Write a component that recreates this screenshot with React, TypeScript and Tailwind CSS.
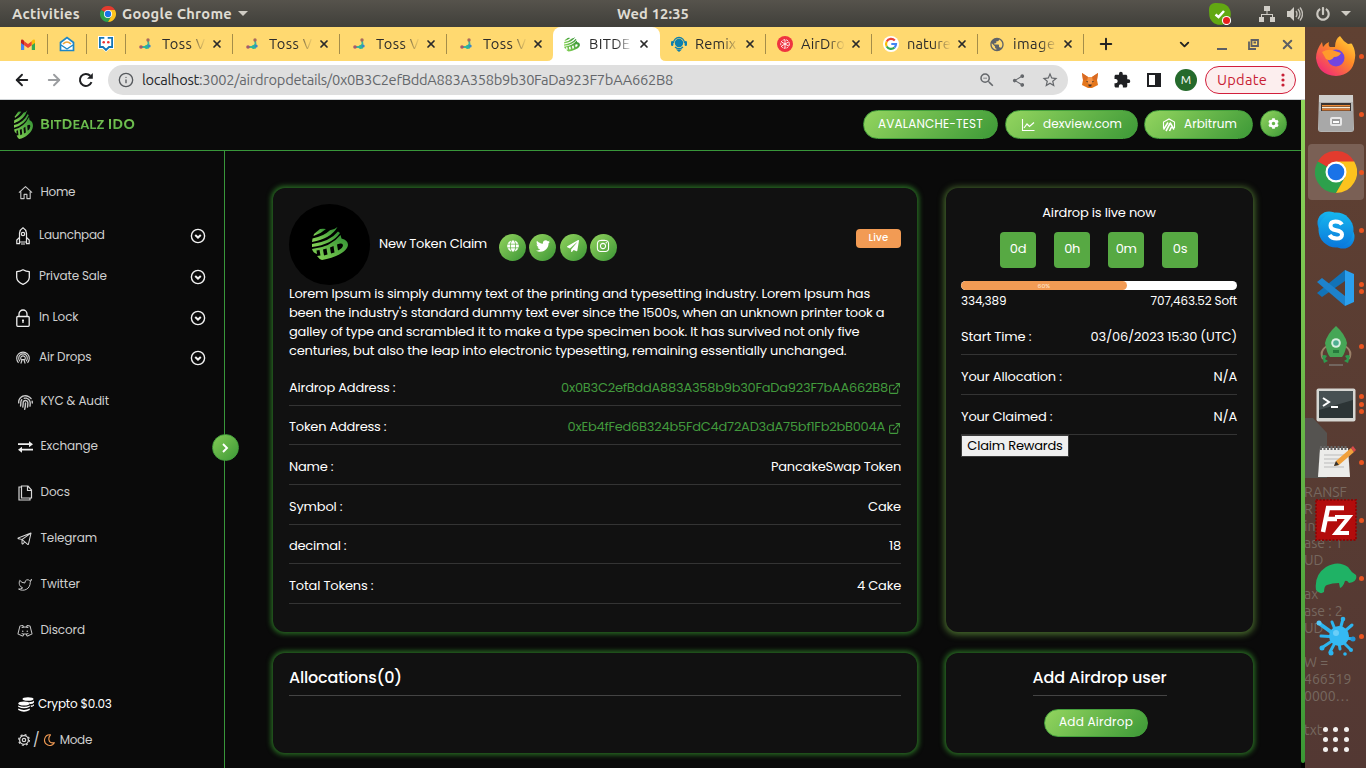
import { useLayoutEffect, useRef, useState } from 'react';
import type { ReactNode } from 'react';
import { FaGlobe, FaTwitter, FaPaperPlane, FaInstagram, FaCog, FaPowerOff, FaFingerprint } from 'react-icons/fa';
import { FiExternalLink, FiTwitter } from 'react-icons/fi';
import { PiTelegramLogo, PiDiscordLogo } from 'react-icons/pi';
import { MdOutlineStarBorder, MdShare, MdOutlineZoomOut, MdPublic, MdExtension } from 'react-icons/md';
import { Info, X, Plus, ChevronDown, ArrowLeft, ArrowRight } from 'lucide-react';

/** Single line of text whose tracking is adjusted so that it spans about `w` pixels. */
function T({ w, className = '', children }: { w: number; className?: string; children: ReactNode }) {
  const ref = useRef<HTMLSpanElement>(null);
  const [ls, setLs] = useState(0);
  useLayoutEffect(() => {
    const el = ref.current;
    if (!el) return;
    const n = (el.textContent || '').length || 1;
    setLs((w - 0.6 - el.getBoundingClientRect().width) / n);
  }, [w]);
  return (
    <span ref={ref} className={`inline-block whitespace-nowrap shrink-0 ${className}`} style={{ letterSpacing: ls }}>
      {children}
    </span>
  );
}

function LogoMark({ className = '', id }: { className?: string; id: string }) {
  return (
    <svg viewBox="0 0 36 34" preserveAspectRatio="none" className={className}>
      <defs>
        <linearGradient id={id} x1="0" y1="1" x2="1" y2="0">
          <stop offset="0" stopColor="#8ad657" />
          <stop offset="1" stopColor="#2f8f33" />
        </linearGradient>
      </defs>
      <g fill={`url(#${id})`} fillRule="evenodd">
        <path d="M2 7 L8 2 Q11 1.500 14 2 Q9 6.500 1.500 9Z" />
        <path d="M.5 11.500 Q12 9 18 3.200 Q22 3 25.500 0 Q19 11.500 0 15Z" />
        <path d="M0 17 Q18 14.500 26 4.500 L28 6 Q20 17.500 0 20Z" />
        <path d="M0 22 Q19 20 28.500 8 L29.500 11.500 Q36 13 36 18 C35 26 21 31 10 33 Q7 32 5 29 L8.500 28.500 L7.500 23 L4.500 23.500 L5 27 Q1 26 0 22ZM11 22.500 L12 28.500 L15.500 27.500 L14.500 21.500ZM18 20.500 L19 26.500 L22.500 25.500 L21.500 19ZM25 17.500 L26 23.500 Q31 21 31 18 Q30 15.500 25 17.500Z" />
      </g>
    </svg>
  );
}

function ChromeLogo({ className = '' }: { className?: string }) {
  return (
    <svg viewBox="0 0 48 48" className={className}>
      <path d="M24 24 L3.200 12 A24 24 0 0 1 44.800 12 Z" fill="#e33b2e" />
      <path d="M24 24 L34.400 30 L24 48 A24 24 0 0 1 3.200 12 Z" fill="#2da04c" />
      <path d="M24 12 H44.800 A24 24 0 0 1 24 48 L34.400 30Z" fill="#fcc31e" />
      <circle cx="24" cy="24" r="12" fill="#fff" />
      <circle cx="24" cy="24" r="9.500" fill="#1a73e8" />
    </svg>
  );
}

function TopBar() {
  return (
    <header className="flex h-[27px] items-center bg-linear-to-b from-[#56534c] to-[#403f3a] font-['Ubuntu','Noto_Sans',sans-serif] text-[14.67px] font-semibold text-[#dfdbd2]">
      <div className="flex w-[617px] items-center pl-3">
        <T w={68.6}>Activities</T>
        <ChromeLogo className="ml-5 size-4" />
        <T w={110.6} className="ml-[6px]">Google Chrome</T>
        <svg viewBox="0 0 10 5" className="ml-[6px] h-[5px] w-[10px]"><path d="M0 0H10L5 5Z" fill="#cfccc4" /></svg>
      </div>
      <T w={72.6}>Wed 12:35</T>
      <div className="ml-auto flex items-center pr-[15px]">
        <svg viewBox="0 0 22 22" className="mr-[28px] size-[22px]">
          <rect x="0" y="0" width="14" height="14" rx="6" fill="#62a812" />
          <circle cx="11" cy="11" r="10.800" fill="#62a812" />
          <path d="M6.500 11.500 L9.500 14 L15 8" stroke="#fff" strokeWidth="2.500" fill="none" />
          <circle cx="17.500" cy="17.500" r="4.600" fill="#fff" />
          <circle cx="17.500" cy="17.500" r="3.500" fill="#e8211d" />
        </svg>
        <svg viewBox="0 0 16 16" className="mr-3 size-4" fill="#d0cdc6">
          <path d="M5 0h6v5H8.500v3H14v3h2v5h-5v-5h2V9H3v2h2v5H0v-5h2V8h5.500V5H5z" />
        </svg>
        <svg viewBox="0 0 16 16" className="mr-[13px] size-4">
          <path d="M0 5h3l4-4v14l-4-4H0z" fill="#d0cdc6" />
          <path d="M9 5q2 3 0 6M11 3q4 5 0 10M13 1.500q5 6.500 0 13" stroke="#c0bdb6" strokeWidth="1.400" fill="none" />
        </svg>
        <FaPowerOff className="mr-[11px] size-[14px] text-[#cbc8c1]" />
        <svg viewBox="0 0 10 5" className="h-[5px] w-[10px]"><path d="M0 0H10L5 5Z" fill="#cfccc4" /></svg>
      </div>
    </header>
  );
}

function TossIcon() {
  return (
    <svg viewBox="0 0 12 12" className="size-[12px]">
      <path d="M2 9 L7 9 L9.500 6 L9 2 M7 9 L10 10" stroke="#3bb79a" strokeWidth="1.800" fill="none" />
      <circle cx="2" cy="9" r="1.800" fill="#a65a6c" /><circle cx="9" cy="2" r="1.700" fill="#a86a5c" />
      <circle cx="7.500" cy="9" r="2" fill="#2cb59b" /><circle cx="10.200" cy="8" r="1.500" fill="#3a86c8" />
    </svg>
  );
}

function Tab({ icon, label, w, width = 'w-[107px]', gap = 'ml-[9px]', active = false, sep = true }: { icon: ReactNode; label: string; w: number; width?: string; gap?: string; active?: boolean; sep?: boolean }) {
  return (
    <div className={`${width} relative flex h-[34px] shrink-0 items-center pl-[11px] ${active ? 'rounded-t-lg bg-white' : ''}`}>
      {active && <svg viewBox="0 0 6 6" className="absolute bottom-0 -left-[6px] size-[6px]"><path d="M6 0Q6 6 0 6H6z" fill="#fff" /></svg>}
      {active && <svg viewBox="0 0 6 6" className="absolute -right-[6px] bottom-0 size-[6px]"><path d="M0 0Q0 6 6 6H0z" fill="#fff" /></svg>}
      <span className="flex w-4 justify-center">{icon}</span>
      <span className={`${gap} w-[44px] overflow-hidden [mask-image:linear-gradient(to_right,#000_60%,transparent_100%)]`}>
        <T w={w}>{label}</T>
      </span>
      <X className="ml-[5px] size-[12px] text-[#2b2b2b]" strokeWidth={3.4} />
      {sep && <span className="ml-auto h-5 w-px bg-[#a58d49]" />}
    </div>
  );
}

function TabBar() {
  return (
    <div className="flex h-[34px] items-center bg-[#ffd970] font-['Ubuntu','Noto_Sans',sans-serif] text-[14.67px] text-[#2b2b2b]">
      <div className="flex w-12 items-center pl-[21px]">
        <svg viewBox="0 0 14 11" className="h-[11px] w-[14px]">
          <path d="M0 1.500V11H3.200V5z" fill="#4285f4" /><path d="M10.800 5V11H14V1.500z" fill="#34a853" />
          <path d="M3.200 2.200 7 5 10.800 2.200V6.200L7 9 3.200 6.200z" fill="#ea4335" />
          <path d="M0 2Q0 0 2 .8L3.200 2V6.200L0 4z" fill="#c5221f" /><path d="M14 2Q14 0 12 .8L10.800 2V6.200L14 4z" fill="#fbbc04" />
        </svg>
        <span className="ml-auto h-5 w-px bg-[#a58d49]" />
      </div>
      <div className="flex w-[39px] items-center pl-[11px]">
        <svg viewBox="0 0 16 16" className="size-4"><path d="M1.500 6.500 8 1.500l6.500 5V14.500h-13z" fill="#fff" stroke="#1c86c7" strokeWidth="1.700" /><path d="M4 8q4-4 8 0" stroke="#f0a63a" strokeWidth="1.600" fill="none" /><path d="M2 9l6 4 6-4" stroke="#1c86c7" strokeWidth="1.400" fill="none" /></svg>
        <span className="ml-auto h-5 w-px bg-[#a58d49]" />
      </div>
      <div className="flex w-[39px] items-center pl-[11px]">
        <svg viewBox="0 0 16 16" className="size-4">
          <path d="M0 0h16v13h-4.500L8 16l-3.500-3H0z" fill="#fff" />
          <path d="M6.300 1.800H1.900V11H5l3 3 3-3h3.100V1.800H9.700" fill="none" stroke="#1476b8" strokeWidth="1.800" />
          <circle cx="5.700" cy="6.300" r="1.300" fill="#e33" /><circle cx="10.300" cy="6.300" r="1.300" fill="#e33" />
        </svg>
        <span className="ml-auto h-5 w-px bg-[#a58d49]" />
      </div>
      <Tab icon={<TossIcon />} label="Toss V" w={44} />
      <Tab icon={<TossIcon />} label="Toss V" w={44} />
      <Tab icon={<TossIcon />} label="Toss V" w={44} />
      <Tab icon={<TossIcon />} label="Toss V" w={44} width="w-[106px]" sep={false} />
      <Tab icon={<LogoMark id="fav" className="h-[15px] w-4" />} label="BITDE" w={42} active sep={false} />
      <Tab
        icon={<svg viewBox="0 0 16 16" className="size-4"><path d="M8 13.500l-3 0 3 2.500 3-2.500z" fill="#0c7fae" /><circle cx="8" cy="7" r="4.200" fill="#0c7fae" /><path d="M2.500 7a5.500 5.500 0 0 1 11 0M4 11q4 3.500 8 0" stroke="#0c7fae" strokeWidth="1.300" fill="none" /><rect x="0" y="5" width="2.400" height="5" rx="1.200" fill="#0c7fae" /><rect x="13.600" y="5" width="2.400" height="5" rx="1.200" fill="#0c7fae" /></svg>}
        label="Remix" w={42} width="w-[106px]" gap="ml-[8px]" />
      <Tab
        icon={<svg viewBox="0 0 16 16" className="size-4"><circle cx="8" cy="8" r="8" fill="#ef3340" /><circle cx="8" cy="8" r="4.300" stroke="#fff" strokeWidth="1" strokeDasharray="2 1" fill="none" /><path d="M8 4v8M4.500 6l7 4M4.500 10l7-4" stroke="#fff" strokeWidth=".9" /></svg>}
        label="AirDro" w={44.500} width="w-[106px]" gap="ml-[8px]" />
      <Tab
        icon={<svg viewBox="0 0 16 16" className="size-4"><circle cx="8" cy="8" r="8" fill="#fff" /><g fill="none" strokeWidth="2.200"><path d="M11.800 4.600A5 5 0 0 0 3.700 5.500" stroke="#ea4335" /><path d="M3.700 5.500a5 5 0 0 0 0 5" stroke="#fbbc05" /><path d="M3.700 10.500a5 5 0 0 0 7.800 1" stroke="#34a853" /><path d="M11.500 11.500A5 5 0 0 0 13 8H8.300" stroke="#4285f4" /></g></svg>}
        label="nature" w={44.500} width="w-[106px]" gap="ml-[8px]" />
      <Tab icon={<MdPublic className="size-[17px] text-[#5f6368]" />} label="image" w={43} width="w-[106px]" gap="ml-[8px]" />
      <Plus className="ml-[13px] size-[18px] text-[#222]" strokeWidth={2.6} />
      <div className="ml-auto flex items-center pr-[10px] text-[#5d5f5c]">
        <ChevronDown className="size-[15px] text-[#222]" strokeWidth={3} />
        <span className="mt-[9px] ml-[25px] h-[2px] w-[10px] bg-[#5d5f64]" />
        <svg viewBox="0 0 11 11" className="ml-[21px] size-[11px]"><path d="M3.500 1h6.500v6H3.500zM5.500 3.500h2.500M1 2.500v7.500h7" fill="none" stroke="#5d5f64" strokeWidth="1.800" /></svg>
        <X className="ml-[21px] size-[15px] text-[#5d5f64]" strokeWidth={3.2} />
      </div>
    </div>
  );
}

function Fox() {
  return (
    <svg viewBox="0 0 16 15" className="h-[15px] w-4">
      <path d="M0 0l6 4h4l6-4-1 7 1 5-4 2-2 1H6l-2-1-4-2 1-5z" fill="#e4761b" />
      <path d="M0 0l6 4-2 3H1zM16 0l-6 4 2 3h3z" fill="#d96a24" /><path d="M6 4h4l1 5-3 3-3-3z" fill="#f5964a" /><path d="M4 8l2 .5-.5 1zM12 8l-2 .5.500 1z" fill="#222" /><path d="M6.300 11.500h3.400l-.5 2H6.800z" fill="#40302a" />
    </svg>
  );
}

function Toolbar() {
  return (
    <div className="flex h-[39px] items-center border-b border-[#cfd3d6] bg-white font-['Ubuntu','Noto_Sans',sans-serif]">
      <ArrowLeft className="ml-[13px] size-[18px] text-[#1f2023]" strokeWidth={2.5} />
      <ArrowRight className="ml-[14px] size-[18px] text-[#9b9da0]" strokeWidth={2.5} />
      <svg viewBox="0 0 16 16" className="ml-[15px] size-4"><path d="M13.500 10.200A6 6 0 1 1 12.300 3.800" fill="none" stroke="#1f2023" strokeWidth="2" /><path d="M14.800 1v5.800H9z" fill="#1f2023" /></svg>
      <div className="ml-[14px] flex h-[30px] w-[960px] items-center rounded-full bg-[#dfdfdf] pr-[9px] pl-[10px] text-[14.67px] text-[#64676b]">
        <Info className="size-4 text-[#56595d]" strokeWidth={2} />
        <T w={531.6} className="ml-2"><span className="text-[#26282b]">localhost</span>:3002/airdropdetails/0x0B3C2efBddA883A358b9b30FaDa923F7bAA662B8</T>
        <MdOutlineZoomOut className="ml-auto size-[18px]" />
        <MdShare className="ml-[15px] size-[15px]" />
        <MdOutlineStarBorder className="ml-[15px] size-[18px]" />
      </div>
      <div className="ml-[14px]"><Fox /></div>
      <MdExtension className="ml-[15px] size-[18px] text-[#1f2023]" />
      <span className="ml-[16px] h-[14px] w-[14px] border-2 border-r-[6px] border-[#1f2023]" />
      <span className="ml-[14px] flex size-[22px] items-center justify-center rounded-full bg-[#256a2c] text-[12px] text-white">M</span>
      <div className="ml-2 flex h-7 w-[91px] items-center rounded-full border border-[#d21f3c] bg-[#fceeee] pl-[11px] text-[14.67px] text-[#c81e35]">
        <T w={50.6}>Update</T>
        <svg viewBox="0 0 4 14" className="ml-[14px] h-[14px] w-1" fill="#c81e35"><circle cx="2" cy="2" r="1.600" /><circle cx="2" cy="7" r="1.600" /><circle cx="2" cy="12" r="1.600" /></svg>
      </div>
    </div>
  );
}

const pill = 'flex items-center rounded-full border border-[#45a03c] bg-linear-[135deg] from-[#93d55f] to-[#3d9937] text-white';

function AppHeader() {
  return (
    <div className="flex h-[51px] items-start border-b border-[#38963a] pt-[10px] text-[12px]">
      <LogoMark id="head" className="ml-[14px] h-[30px] w-[19px]" />
      <T w={95.500} className="ml-[7px] bg-linear-to-b from-[#93dc5e] to-[#4fa843] bg-clip-text pt-[4px] font-['Ubuntu','DejaVu_Sans',sans-serif] text-[15px] leading-5 font-bold text-transparent">
        B<span className="text-[13px]">IT</span>D<span className="text-[13px]">EALZ</span> IDO
      </T>
      <div className="ml-auto flex gap-[7px]">
        <div className={`${pill} h-[29px] w-[135px] justify-center pb-[2px]`}><T w={105.6}>AVALANCHE-TEST</T></div>
        <div className={`${pill} h-[29px] w-[133px] pb-[2px] pl-[15px]`}>
          <svg viewBox="0 0 14 14" className="mt-[3px] size-[14px]" fill="none" stroke="#fff"><path d="M1.500 1v11.500H13.500" strokeWidth="1.100" /><path d="M3 10l3-4 2.500 2.500L13 4.500" strokeWidth="1.200" /></svg>
          <T w={79.6} className="ml-2">dexview.com</T>
        </div>
        <div className={`${pill} -ml-px h-[29px] w-[109px] pb-[2px] pl-[17px]`}>
          <svg viewBox="0 0 14 14" className="mt-[3px] size-[14px]" fill="none" stroke="#fff">
            <path d="M1.500 10V4L7 1l5.500 3v6" strokeWidth="1.100" /><path d="M1.500 11.500L6 4.500M4 13l4-7.500M7.500 13l2-4M12 11.500L8 4.500" strokeWidth="1.600" />
          </svg>
          <T w={53.6} className="ml-2">Arbitrum</T>
        </div>
        <div className={`${pill} size-[27px] justify-center`}><FaCog className="size-[11px]" /></div>
      </div>
      <span className="w-[14px]" />
    </div>
  );
}

function RocketIcon() {
  return (
    <svg viewBox="0 0 14 18" className="h-[18px] w-[14px]" fill="none" stroke="#e6e6e6" strokeWidth="1.200">
      <path d="M3.500 15V6Q4 2.500 7 .8q3 1.700 3.500 5.200v9z" /><circle cx="7" cy="7" r="1.700" /><path d="M3.500 10.500L.8 13v3.700h2.700V15M10.500 10.500l2.700 2.500v3.700h-2.700V15M5 17h4" />
    </svg>
  );
}
function HomeIcon() {
  return <svg viewBox="0 0 16 16" className="-mt-px size-[15px]" fill="none" stroke="#c8c8c8" strokeWidth="1.200" strokeLinejoin="round"><path d="M1 8.200L8 1.800l7 6.400M3 7v7.500h3.500V10h3v4.500H13V7" /></svg>;
}
function ShieldIcon() {
  return <svg viewBox="0 0 14 16" className="h-4 w-[14px]" fill="none" stroke="#f0f0f0" strokeWidth="1.300" strokeLinejoin="round"><path d="M7 .8Q10 2.600 13.300 2.600V8.500Q13 13 7 15.300 1 13 .7 8.500V2.600Q4 2.600 7 .8z" /></svg>;
}
function LockIcon() {
  return <svg viewBox="0 0 14 18" className="h-[18px] w-[14px]" fill="none" stroke="#f0f0f0" strokeWidth="1.300"><rect x=".8" y="7.500" width="12.400" height="9.800" rx="1" /><path d="M3 7.500V5a4 4 0 0 1 8 0v2.500" /><path d="M7 10.500v3.500M6 11.500h2" /></svg>;
}
function DropsIcon() {
  return <svg viewBox="0 0 14 14" className="size-[14px]" fill="none" stroke="#d8d8d8" strokeWidth="1.100"><path d="M2.500 11.800a6.300 6.300 0 1 1 9 0M4 10.300a4.300 4.300 0 1 1 6 0M5.600 9a2.300 2.300 0 1 1 2.800 0M4.800 12.500l1.500-4h1.400l1.500 4" /></svg>;
}
function ExchangeIcon() {
  return <svg viewBox="0 0 15 12" className="h-3 w-[15px]" fill="#f0f0f0"><path d="M0 2.300h11V.3L15 3.200l-4 3V4.100H0zM15 7.700H4V5.800L0 8.700l4 3V9.600h11z" /></svg>;
}
function DocsIcon() {
  return <svg viewBox="0 0 15 16" className="h-4 w-[15px]" fill="none" stroke="#d8d8d8" strokeWidth="1.200"><path d="M3.500 1V13h10V5L10 1zM3.500 2H1v13h11v-2M9.500 1v4.500h4" /></svg>;
}

function CircleChevron() {
  return <svg viewBox="0 0 16 16" className="size-4" fill="none" stroke="#f2f2f2"><circle cx="8" cy="8" r="6.600" strokeWidth="1.400" /><path d="M5.200 7L8 9.600 10.800 7" strokeWidth="2" /></svg>;
}

type Item = { label: string; w: number; icon: ReactNode; mt: string; chev?: boolean };
const items: Item[] = [
  { label: 'Home', w: 35.3, icon: <HomeIcon />, mt: 'mt-[31px]' },
  { label: 'Launchpad', w: 66.3, icon: <RocketIcon />, mt: 'mt-[23px]', chev: true },
  { label: 'Private Sale', w: 68.5, icon: <ShieldIcon />, mt: 'mt-[21px]', chev: true },
  { label: 'In Lock', w: 40, icon: <LockIcon />, mt: 'mt-[21px]', chev: true },
  { label: 'Air Drops', w: 53, icon: <DropsIcon />, mt: 'mt-[20px]', chev: true },
  { label: 'KYC & Audit', w: 69, icon: <FaFingerprint className="size-[15px] text-[#c8c8c8]" />, mt: 'mt-[24px]' },
  { label: 'Exchange', w: 58, icon: <ExchangeIcon />, mt: 'mt-[25px]' },
  { label: 'Docs', w: 30, icon: <DocsIcon />, mt: 'mt-[26px]' },
  { label: 'Telegram', w: 57, icon: <PiTelegramLogo className="-mt-px size-[16px] text-[#d8d8d8]" />, mt: 'mt-[26px]' },
  { label: 'Twitter', w: 40, icon: <FiTwitter className="-mt-px size-[14px] text-[#c8c8c8]" strokeWidth={1.7} />, mt: 'mt-[26px]' },
  { label: 'Discord', w: 45, icon: <PiDiscordLogo className="-mt-px size-[17px] text-[#c8c8c8]" />, mt: 'mt-[26px]' },
];

function Sidebar() {
  return (
    <aside className="relative h-[617px] w-[225px] shrink-0 border-r border-[#38963a] text-[12px] text-[#cfcfcf]">
      {items.map((it) => (
        <div key={it.label} className={`${it.mt} flex h-5 items-center ${it.chev ? 'pl-[15px]' : 'pl-[17px]'}`}>
          <span className="flex w-4 shrink-0 justify-center pt-[2px]">{it.icon}</span>
          <T w={it.w} className={it.chev ? 'ml-2' : 'ml-[7.500px]'}>{it.label}</T>
          {it.chev && <span className="mr-[18px] ml-auto pt-[2px]"><CircleChevron /></span>}
        </div>
      ))}
      <div className="mt-[54px] flex h-5 items-center pl-[18px] text-white">
        <svg viewBox="0 0 16 15" className="h-[15px] w-4" fill="#fff">
          <ellipse cx="10" cy="2" rx="5.500" ry="1.800" /><path d="M11 5q4 0 5-1.500v2q-1 1.500-4 1.600zM12.500 8.500q3 0 3.500-1.500v1.500q-1 1.300-3 1.500z" />
          <ellipse cx="6" cy="6.500" rx="5.800" ry="2" /><path d="M.2 8.500q5.800 2.600 11.600 0v1.200q-5.800 3.300-11.600 0zM.2 11.600q5.800 2.600 11.600 0v1.400q-5.800 3.300-11.600 0z" />
        </svg>
        <T w={74.3} className="ml-1">Crypto $0.03</T>
      </div>
      <div className="mt-4 flex h-5 items-center pl-[18px]">
        <svg viewBox="0 0 12 12" className="size-3" fill="none" stroke="#d8d8d8"><circle cx="6" cy="6" r="4.400" strokeWidth="1.200" /><circle cx="6" cy="6" r="1.700" strokeWidth="1.200" /><circle cx="6" cy="6" r="5.400" strokeWidth="1.200" strokeDasharray="2 2.240" /></svg>
        <span className="ml-[3px] text-[14px]">/</span>
        <svg viewBox="0 0 12 12" className="ml-[3px] size-3" fill="none" stroke="#f29b54" strokeWidth="1.100" strokeLinejoin="round"><path d="M7.500.8A5.300 5.300 0 1 0 11.400 8.800Q6.500 9.500 5.900 5.600 5.600 2.800 7.500.8z" /></svg>
        <T w={33} className="ml-[5px]">Mode</T>
      </div>
      <button className="absolute top-[283px] left-[212px] flex size-[27px] items-center justify-center rounded-full border border-[#45a03c] bg-linear-[135deg] from-[#83cb55] to-[#3d9937] pr-[2px]">
        <svg viewBox="0 0 8 10" className="h-[10px] w-2"><path d="M2 1l4 4-4 4" stroke="#fff" strokeWidth="1.900" fill="none" /></svg>
      </button>
    </aside>
  );
}

function Row({ label, lw, h, children }: { label: string; lw: number; h: string; children: ReactNode }) {
  return (
    <div className={`${h} flex items-end justify-between border-b border-[#343434] pb-[7px] leading-5`}>
      <T w={lw}>{label}</T>
      {children}
    </div>
  );
}

const greenGlow = 'rounded-[12px] bg-[#111] shadow-[0_0_5px_1.500px_rgba(54,150,46,0.7)]';

function MainCard() {
  return (
    <section className={`${greenGlow} h-[444px] px-4 pt-4`}>
      <div className="flex h-[80px] items-center">
        <div className="flex size-[81px] items-center justify-center rounded-full bg-black"><LogoMark id="avatar" className="h-[34px] w-9" /></div>
        <T w={108.6} className="ml-[9px]">New Token Claim</T>
        <div className="mt-[6px] ml-[12px] flex gap-[3.300px] text-[14px] text-white">
          {[<FaGlobe key="g" className="size-3" />, <FaTwitter key="t" />, <FaPaperPlane key="p" className="size-3" />, <FaInstagram key="i" />].map((icon, i) => (
            <span key={i} className="flex size-[27px] items-center justify-center rounded-full bg-linear-to-br from-[#93d55f] to-[#389535] pb-[2px]">{icon}</span>
          ))}
        </div>
        <span className="-mt-[12px] ml-auto flex h-[19px] w-[45px] items-center justify-center rounded-[4px] bg-[#f29b54] pb-[2px] text-[10px] font-medium"><T w={20.6}>Live</T></span>
      </div>
      <p className="flex h-[76px] flex-col items-start leading-[19px]">
        <T w={581.6}>Lorem Ipsum is simply dummy text of the printing and typesetting industry. Lorem Ipsum has</T>
        <T w={596}>been the industry's standard dummy text ever since the 1500s, when an unknown printer took a</T>
        <T w={571}>galley of type and scrambled it to make a type specimen book. It has survived not only five</T>
        <T w={558}>centuries, but also the leap into electronic typesetting, remaining essentially unchanged.</T>
      </p>
      <Row label="Airdrop Address :" lw={107} h="h-[46px]">
        <span className="flex items-center text-[#429a3d]"><T w={327.6}>0x0B3C2efBddA883A358b9b30FaDa923F7bAA662B8</T><FiExternalLink className="mt-px size-[13px]" /></span>
      </Row>
      <Row label="Token Address :" lw={98} h="h-[39px]">
        <span className="flex items-center text-[#429a3d]"><T w={318}>0xEb4fFed6B324b5FdC4d72AD3dA75bf1Fb2bB004A</T><FiExternalLink className="mt-[2px] ml-[3px] size-[13px]" /></span>
      </Row>
      <Row label="Name :" lw={45} h="h-[40px]"><T w={130.6}>PancakeSwap Token</T></Row>
      <Row label="Symbol :" lw={54} h="h-[40px]"><T w={33.6}>Cake</T></Row>
      <Row label="decimal :" lw={58} h="h-[39px]"><T w={12.6}>18</T></Row>
      <Row label="Total Tokens :" lw={85} h="h-[40px]"><T w={44.6}>4 Cake</T></Row>
    </section>
  );
}

function StatusCard() {
  return (
    <section className="flex h-[444px] flex-col rounded-[12px] bg-[#111] px-[15px] pt-[15px] pr-4 shadow-[0_1px_6px_1.500px_rgba(100,150,62,0.65)]">
      <T w={114} className="self-center leading-5">Airdrop is live now</T>
      <div className="mt-[9px] flex justify-center gap-[18px]">
        {([['0d', 17], ['0h', 16], ['0m', 21], ['0s', 15]] as [string, number][]).map(([t, w]) => (
          <span key={t} className="flex size-9 items-center justify-center rounded-[4px] bg-[#57a943] pb-[3px]"><T w={w}>{t}</T></span>
        ))}
      </div>
      <div className="mt-[13px] h-[9px] shrink-0 overflow-hidden rounded-full bg-white">
        <div className="flex h-full w-3/5 items-center justify-center rounded-full bg-[#f29b54] text-[6px] leading-none font-medium text-[#fde0c6]">60%</div>
      </div>
      <div className="mt-[2px] flex justify-between text-[12px] leading-[18px]">
        <T w={46}>334,389</T>
        <T w={87}>707,463.52 Soft</T>
      </div>
      <Row label="Start Time :" lw={71} h="h-[45px]"><T w={147}>03/06/2023 15:30 (UTC)</T></Row>
      <Row label="Your Allocation :" lw={101.6} h="h-[40px]"><T w={24}>N/A</T></Row>
      <Row label="Your Claimed :" lw={92} h="h-[40px]"><T w={24}>N/A</T></Row>
      <button className="flex h-[22px] w-[108px] items-center justify-center self-start border border-[#3a3a3a] bg-[#efefef] text-black"><T w={96}>Claim Rewards</T></button>
    </section>
  );
}

function Dots({ n }: { n: number }) {
  return (
    <span className="absolute top-0 right-[2px] flex h-full flex-col items-center justify-center gap-[2.500px]">
      {Array.from({ length: n }, (_, i) => <span key={i} className="size-[5px] rounded-full bg-[#e95420]" />)}
    </span>
  );
}

const dockIcons: { n: number; active?: boolean; art: ReactNode }[] = [
  { n: 1, art: <svg viewBox="0 0 40 40" className="size-10"><defs><linearGradient id="ff" x1="1" y1="0" x2=".2" y2="1"><stop offset="0" stopColor="#ffe23f" /><stop offset=".45" stopColor="#ff8c26" /><stop offset="1" stopColor="#f0267a" /></linearGradient></defs><path d="M24 0q3 5 8 8 4-1 4 0 4 7 3 14-2 17-19 18Q2 39 0 22q0-8 6-16l1 5q3-4 6-5-1 4 1 5h5q0-8 5-11z" fill="url(#ff)" /><circle cx="20" cy="22" r="8.500" fill="#7245e0" /><path d="M6 16q7-4 13-1l6 2q-2 4-7 4-3 5-8 2z" fill="#ff9a2c" /></svg> },
  { n: 1, art: <svg viewBox="0 0 38 40" className="h-[40px] w-[38px]"><path d="M2 1h34l1 34q0 3-3 3H4q-3 0-3-3z" fill="#b5b5b4" /><path d="M2 1h34v7H2z" fill="#cfcfcd" /><path d="M4 9h30v8H4z" fill="#3b3431" /><path d="M5 11h28v1.500H5z" fill="#ec8a35" /><path d="M5 13h28v1.500H5z" fill="#f5ecd8" /><path d="M5 14.500h28v2H5z" fill="#e07b30" /><path d="M2 17h34v20H2z" fill="#a8a8a8" /><rect x="13" y="23" width="12" height="9" rx="2" fill="#e8e8e8" /><rect x="15" y="25" width="8" height="5" fill="#999" /><path d="M16 27h6v2h-6z" fill="#fff" /></svg> },
  { n: 1, active: true, art: <ChromeLogo className="size-[42px]" /> },
  { n: 1, art: <svg viewBox="0 0 38 38" className="size-[38px]"><defs><linearGradient id="sk" x1="0" y1="0" x2="0" y2="1"><stop offset="0" stopColor="#16b7ee" /><stop offset="1" stopColor="#0a77dc" /></linearGradient></defs><g fill="url(#sk)"><circle cx="12" cy="12" r="11.500" /><circle cx="26" cy="26" r="11.500" /><circle cx="19" cy="19" r="17.500" /></g><path d="M25 13.500q-2-3-6.500-3-5 0-5 4t5.500 4.700q6 1 6 4.300 0 4-5.500 4-5 0-7-3.500" fill="none" stroke="#fff" strokeWidth="4" /></svg> },
  { n: 2, art: <svg viewBox="0 0 38 38" className="size-[38px]"><path d="M28 1v11L5 28 0 24z" fill="#1273b8" /><path d="M0 13l5-4 23 18v10z" fill="#1d82cc" /><path d="M28 1l9 4v28l-9 4z" fill="#2ba0ee" /></svg> },
  { n: 1, art: <svg viewBox="0 0 32 40" className="h-[40px] w-8"><path d="M7 20q-8 5-4 13M25 20q8 5 4 13" stroke="#9a8068" strokeWidth="2" fill="none" /><path d="M16 0q9 8 11 17 -2 11-5 14H10q-3-3-5-14Q7 8 16 0z" fill="#46a656" /><circle cx="16" cy="17" r="4.800" fill="#d8efe0" /><circle cx="16" cy="17" r="2.800" fill="#4fae91" /><path d="M2 30q2-2 5 0l-2 3 3 2-4 2zM30 30q-2-2-5 0l2 3-3 2 4 2z" fill="#2d9b4e" /><path d="M13 24h6v3h-6z" fill="#267a3c" /><path d="M9 39h14" stroke="#79706a" strokeWidth="1.600" /></svg> },
  { n: 3, art: <svg viewBox="0 0 40 34" className="mt-[2px] h-[34px] w-10"><rect x=".5" y=".5" width="39" height="33" rx="2" fill="#d6d6d2" /><rect x="3" y="3" width="34" height="27" fill="#2c3435" /><path d="M3 3h34v9L3 22z" fill="#475052" /><path d="M7 10l6 4-6 4M15 19h7" stroke="#fff" strokeWidth="2" fill="none" /></svg> },
  { n: 1, art: <svg viewBox="0 0 40 34" className="-mt-[2px] h-[34px] w-10"><path d="M4 4h28l2 29H2z" fill="#ececea" /><path d="M4 4h28" stroke="#666" strokeWidth="4" strokeDasharray="2 1.500" /><path d="M8 11h20M8 15h16M8 19h12M8 23h20" stroke="#bbb" strokeWidth="1" /><path d="M18 22l2-5L35 4l3 4-15 13z" fill="#f0a03c" /><path d="M35 4l2-2 3 4-2 2z" fill="#d94b4b" /><path d="M18 22l2-5 3 4z" fill="#333" /></svg> },
  { n: 1, art: <svg viewBox="0 0 42 42" className="size-[42px]"><rect x="1" y="1" width="40" height="40" fill="#b30c0c" stroke="#8b0808" strokeWidth="2" strokeDasharray="2 1.500" /><g stroke="#fff" strokeWidth="4.500" fill="none"><path d="M29 9H13l-5 24M11 20h11" /><path d="M20 18h14L21 34h13" strokeWidth="4" /></g></svg> },
  { n: 1, art: <svg viewBox="0 0 42 32" className="h-8 w-[42px]"><path d="M1 28Q-1 13 11 5 23-2 33 5q3 5 8 8 2 7-7 8-2-3-4-2-2 6-5 7l-1-5q-7 0-12 2-3 1-3 7-4 3-8-2z" fill="#1fb265" /></svg> },
  { n: 1, art: <svg viewBox="0 0 40 40" className="size-10"><g stroke="#2cb4ef" strokeLinecap="round" fill="none"><path d="M22 21L4 8" strokeWidth="4" /><path d="M22 21L27 3M22 21L36 9M22 21L37 23M22 21L34 33M22 21L24 33M22 21L14 36M22 21L7 31M22 21L5 20M22 21L16 6" strokeWidth="3" /></g><circle cx="23" cy="20" r="10" fill="#35b9f3" /><circle cx="3" cy="7" r="2.500" fill="#56c7f7" /><circle cx="27" cy="3" r="2.300" fill="#2cb4ef" /><circle cx="37" cy="23" r="2.500" fill="#2196d8" /><circle cx="15" cy="37" r="2.500" fill="#2cb4ef" /><circle cx="29" cy="38" r="1.800" fill="#2cb4ef" /><circle cx="6" cy="32" r="2.500" fill="#2cb4ef" /><circle cx="35" cy="34" r="2" fill="#2cb4ef" /><circle cx="20" cy="17" r="3" fill="#8fdcfb" opacity=".6" /></svg> },
];

function Dock() {
  return (
    <nav className="relative h-[741px] w-[61px] shrink-0 overflow-hidden bg-linear-to-b from-[#604132] to-[#533833]">
      <div className="absolute top-[391px] left-0 h-[60px] w-[22px] bg-[#555350] [clip-path:polygon(0_0,8px_0,22px_15px,22px_100%,0_100%)]" />
      <div className="absolute top-[457px] -left-px w-[62px] font-['Ubuntu','Noto_Sans',sans-serif] text-[14px] leading-[17px] whitespace-pre text-[#76685f]">
        {'RANSF\nR\nin\nase : 1\nUD\n\nax\nase : 2\nUD\n\nW =\n466519\n0000…\n\ntxt'}
      </div>
      {dockIcons.map((d, i) => (
        <div key={i} className="relative flex h-[58px] items-center justify-center">
          <span className={`flex size-14 items-center justify-center rounded-[4px] ${d.active ? 'bg-[#7a6055]' : ''}`}>{d.art}</span>
          <Dots n={d.n} />
        </div>
      ))}
      <div className="relative mt-[62px] ml-[18px] grid w-[26px] grid-cols-3 gap-[5px]">
        {Array.from({ length: 9 }, (_, i) => <span key={i} className="size-[5px] rounded-full bg-[#f3f1ef]" />)}
      </div>
    </nav>
  );
}

export default function App() {
  return (
    <div className="h-[768px] w-[1366px] overflow-hidden bg-[#0a0a0a]">
      <TopBar />
      <div className="flex">
        <div className="w-[1305px] shrink-0">
          <TabBar />
          <Toolbar />
          <div className="flex h-[668px] bg-[#0a0a0a] font-['Poppins','Inter',sans-serif] text-[13px] text-white">
            <div className="w-[1301px]">
              <AppHeader />
              <div className="flex">
                <Sidebar />
                <main className="grid grid-cols-[644px_307px] content-start gap-x-[29px] gap-y-[21px] pt-[37px] pl-12">
                  <MainCard />
                  <StatusCard />
                  <section className={`${greenGlow} h-[100px] px-4 pt-[13px]`}>
                    <h2 className="h-[30px] border-b border-[#444] text-[16px] leading-6 font-medium"><T w={113.6}>Allocations(0)</T></h2>
                  </section>
                  <section className={`${greenGlow} flex h-[100px] flex-col items-center pt-[13px]`}>
                    <h2 className="h-[30px] border-b border-[#444] text-[16px] leading-6 font-medium"><T w={134.6}>Add Airdrop user</T></h2>
                    <button className={`${pill} mt-[13px] mr-[7px] h-7 w-[104px] justify-center pb-[2px] text-[12px]`}><T w={74.6}>Add Airdrop</T></button>
                  </section>
                </main>
              </div>
            </div>
            <div className="h-full w-1 bg-black"><div className="h-[663px] rounded-b-full bg-linear-to-b from-[#91d65b] to-[#3b9835]" /></div>
          </div>
        </div>
        <Dock />
      </div>
    </div>
  );
}
